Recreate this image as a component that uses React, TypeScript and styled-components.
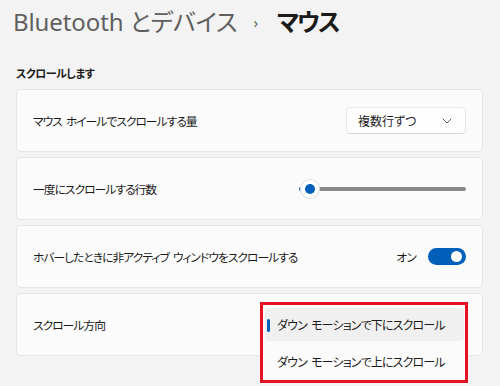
import React from 'react';
import styled, { createGlobalStyle } from 'styled-components';

const GlobalStyle = createGlobalStyle`
  html, body {
    margin: 0;
    padding: 0;
    background: #f3f3f3;
  }
  body {
    font-family: 'Noto Sans', 'Noto Sans CJK JP', sans-serif;
    font-feature-settings: 'palt';
    color: #1b1b1b;
  }
`;

const Page = styled.div`
  width: 500px;
  height: 386px;
  overflow: hidden;
  padding: 2px 17px 0 16px;
  box-sizing: border-box;
`;

const Breadcrumb = styled.div`
  display: flex;
  align-items: center;
  height: 40px;
  margin-left: -3px;
  font-size: 24px;
  line-height: 40px;
`;

const Parent = styled.span`
  color: #5f5f5f;
  letter-spacing: -0.1px;
`;

const Chevron = styled.span`
  color: #5f5f5f;
  font-size: 15px;
  margin: 0 19px 0 16px;
`;

const Current = styled.span`
  color: #1a1a1a;
  font-weight: 700;
  letter-spacing: -2px;
`;

const SectionTitle = styled.div`
  margin-top: 22px;
  height: 20px;
  font-size: 11px;
  font-weight: 600;
  line-height: 20px;
  letter-spacing: -0.5px;
`;

const CardList = styled.div`
  display: flex;
  flex-direction: column;
  gap: 5px;
  margin-top: 5px;
`;

const Card = styled.div`
  position: relative;
  display: flex;
  align-items: center;
  justify-content: space-between;
  height: 63px;
  padding: 0 16px 0 16px;
  box-sizing: border-box;
  background: #fbfbfb;
  border: 1px solid #e5e5e5;
  border-radius: 4px;
  font-size: 11.8px;
`;

const Label = styled.span`
  color: #1b1b1b;
  letter-spacing: -1px;
  word-spacing: 2px;
  white-space: nowrap;
`;

const Select = styled.div`
  display: flex;
  align-items: center;
  justify-content: space-between;
  width: 120px;
  height: 27px;
  padding: 0 13px 0 11px;
  box-sizing: border-box;
  background: #fefefe;
  border: 1px solid #e7e7e7;
  border-bottom-color: #d6d6d6;
  border-radius: 4px;
  font-size: 12px;
  color: #1b1b1b;
`;

const Slider = styled.div`
  position: relative;
  width: 167px;
  height: 20px;
  display: flex;
  align-items: center;
`;

const Track = styled.div`
  flex: 1;
  height: 4px;
  border-radius: 2px;
  background: #8a8a8a;
  margin-left: 6px;
`;

const Fill = styled.div`
  position: absolute;
  left: 0;
  top: 8px;
  width: 8px;
  height: 4px;
  border-radius: 2px;
  background: #005fb8;
`;

const Thumb = styled.div`
  position: absolute;
  left: 2px;
  top: 1px;
  width: 18px;
  height: 18px;
  border-radius: 50%;
  background: #ffffff;
  box-shadow: 0 0 0 1px #e3e3e3;
  display: flex;
  align-items: center;
  justify-content: center;
  &::after {
    content: '';
    width: 10px;
    height: 10px;
    border-radius: 50%;
    background: #005fb8;
  }
`;

const ToggleGroup = styled.div`
  display: flex;
  align-items: center;
  gap: 12px;
  letter-spacing: -0.8px;
`;

const Toggle = styled.div`
  width: 38px;
  height: 17px;
  border-radius: 9px;
  background: #005fb8;
  display: flex;
  align-items: center;
  justify-content: flex-end;
  padding-right: 4px;
  box-sizing: border-box;
  &::after {
    content: '';
    width: 11px;
    height: 11px;
    border-radius: 50%;
    background: #ffffff;
  }
`;

const Flyout = styled.div`
  position: absolute;
  left: 243px;
  top: 8px;
  width: 208px;
  height: 81px;
  box-sizing: border-box;
  border: 3px solid #e81123;
  background: #fbfbfb;
  padding: 3px 1px 0 2px;
  display: flex;
  flex-direction: column;
`;

const Option = styled.div<{ $selected?: boolean }>`
  position: relative;
  height: 33px;
  flex-shrink: 0;
  display: flex;
  align-items: center;
  padding-left: 12px;
  border-radius: 4px;
  background: ${(p) => (p.$selected ? '#f0f0f0' : 'transparent')};
  font-size: 12px;
  letter-spacing: -0.85px;
  word-spacing: 2px;
  white-space: nowrap;
  color: #1b1b1b;
  margin-bottom: 4px;
  &::before {
    content: '';
    display: ${(p) => (p.$selected ? 'block' : 'none')};
    position: absolute;
    left: 2px;
    top: 11px;
    width: 3px;
    height: 13px;
    border-radius: 2px;
    background: #005fb8;
  }
`;

const ChevronDown = () => (
  <svg width="10" height="6" viewBox="0 0 10 6" fill="none">
    <path d="M1 1l4 4 4-4" stroke="#5f5f5f" strokeWidth="1" strokeLinecap="round" strokeLinejoin="round" />
  </svg>
);

export default function App() {
  return (
    <>
      <GlobalStyle />
      <Page>
        <Breadcrumb>
          <Parent>Bluetooth とデバイス</Parent>
          <Chevron>›</Chevron>
          <Current>マウス</Current>
        </Breadcrumb>
        <SectionTitle>スクロールします</SectionTitle>
        <CardList>
          <Card>
            <Label>マウス ホイールでスクロールする量</Label>
            <Select>
              <span>複数行ずつ</span>
              <ChevronDown />
            </Select>
          </Card>
          <Card>
            <Label>一度にスクロールする行数</Label>
            <Slider>
              <Track />
              <Fill />
              <Thumb />
            </Slider>
          </Card>
          <Card>
            <Label>ホバーしたときに非アクティブ ウィンドウをスクロールする</Label>
            <ToggleGroup>
              <span>オン</span>
              <Toggle />
            </ToggleGroup>
          </Card>
          <Card>
            <Label>スクロール方向</Label>
            <Flyout>
              <Option $selected>ダウン モーションで下にスクロール</Option>
              <Option>ダウン モーションで上にスクロール</Option>
            </Flyout>
          </Card>
        </CardList>
      </Page>
    </>
  );
}
